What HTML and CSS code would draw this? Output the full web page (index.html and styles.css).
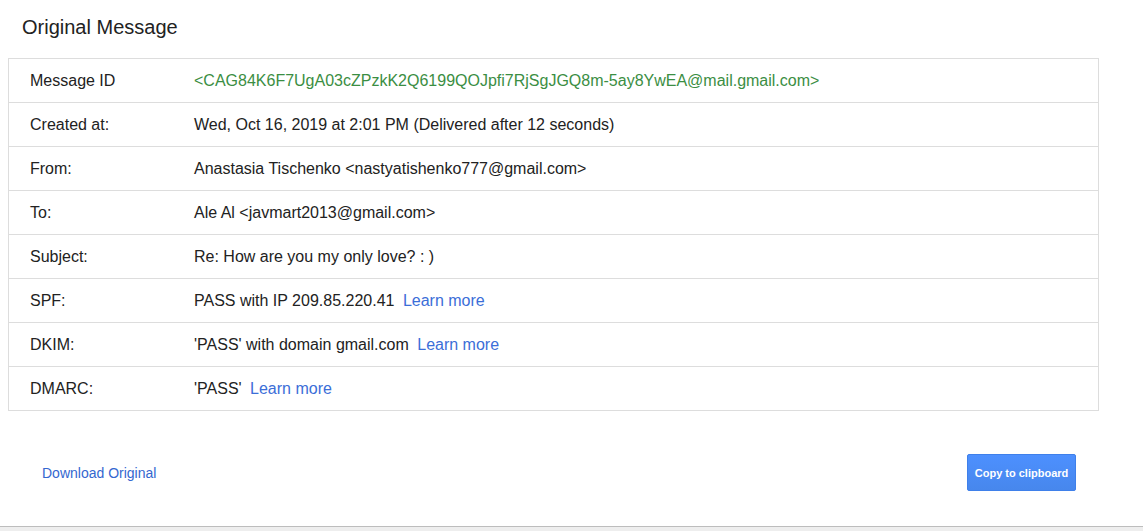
FILE: index.html
```html
<!DOCTYPE html>
<html>
<head>
<meta charset="utf-8">
<link rel="stylesheet" href="styles.css">
</head>
<body>
<div class="page">
  <h1 class="title">Original Message</h1>
  <table class="info">
    <tr><td class="label">Message ID</td><td class="value id">&lt;CAG84K6F7UgA03cZPzkK2Q6199QOJpfi7RjSgJGQ8m-5ay8YwEA@mail.gmail.com&gt;</td></tr>
    <tr><td class="label">Created at:</td><td class="value">Wed, Oct 16, 2019 at 2:01 PM (Delivered after 12 seconds)</td></tr>
    <tr><td class="label">From:</td><td class="value">Anastasia Tischenko &lt;nastyatishenko777@gmail.com&gt;</td></tr>
    <tr><td class="label">To:</td><td class="value">Ale Al &lt;javmart2013@gmail.com&gt;</td></tr>
    <tr><td class="label">Subject:</td><td class="value">Re: How are you my only love? : )</td></tr>
    <tr><td class="label">SPF:</td><td class="value">PASS with IP 209.85.220.41 <a class="link" href="#">Learn more</a></td></tr>
    <tr><td class="label">DKIM:</td><td class="value">'PASS' with domain gmail.com <a class="link" href="#">Learn more</a></td></tr>
    <tr><td class="label">DMARC:</td><td class="value">'PASS' <a class="link" href="#">Learn more</a></td></tr>
  </table>
  <div class="actions">
    <a class="download" href="#">Download Original</a>
    <button class="copy">Copy to clipboard</button>
  </div>
</div>
<div class="bottom"></div>
</body>
</html>
```
FILE: styles.css
```css
html, body {
  margin: 0;
  padding: 0;
  background: #fff;
  font-family: "Liberation Sans", Arial, sans-serif;
  color: #222;
}
.page {
  height: 526px;
  box-sizing: border-box;
  padding: 0 0 0 8px;
}
.title {
  margin: 0;
  padding: 15px 0 0 14px;
  height: 58px;
  box-sizing: border-box;
  font-size: 20px;
  font-weight: normal;
  line-height: 24px;
  color: #222;
}
.info {
  width: 1091px;
  border-collapse: collapse;
  border: 1px solid #ddd;
}
.info td {
  height: 43px;
  padding: 0;
  border-top: 1px solid #ddd;
  font-size: 16px;
  vertical-align: middle;
  line-height: 20px;
}
.label {
  width: 164px;
  padding-left: 21px !important;
}
.value {
  color: #222;
}
.id {
  color: #3b8e43;
}
.link {
  color: #3b6ed8;
  text-decoration: none;
  margin-left: 4px;
}
.actions {
  display: flex;
  align-items: center;
  justify-content: space-between;
  width: 1034px;
  padding: 43px 0 0 34px;
}
.download {
  font-size: 14px;
  color: #3467d0;
  text-decoration: none;
}
.copy {
  width: 109px;
  height: 37px;
  background: #4a8af4;
  background-image: linear-gradient(#4d90fe, #4787ed);
  border: 1px solid #3f80ea;
  border-radius: 2px;
  color: #fff;
  font-family: "Liberation Sans", Arial, sans-serif;
  font-size: 11px;
  font-weight: bold;
  padding: 0;
}
.bottom {
  height: 5px;
  border-top: 1px solid #bdbdbd;
  background: #eee;
}
```
